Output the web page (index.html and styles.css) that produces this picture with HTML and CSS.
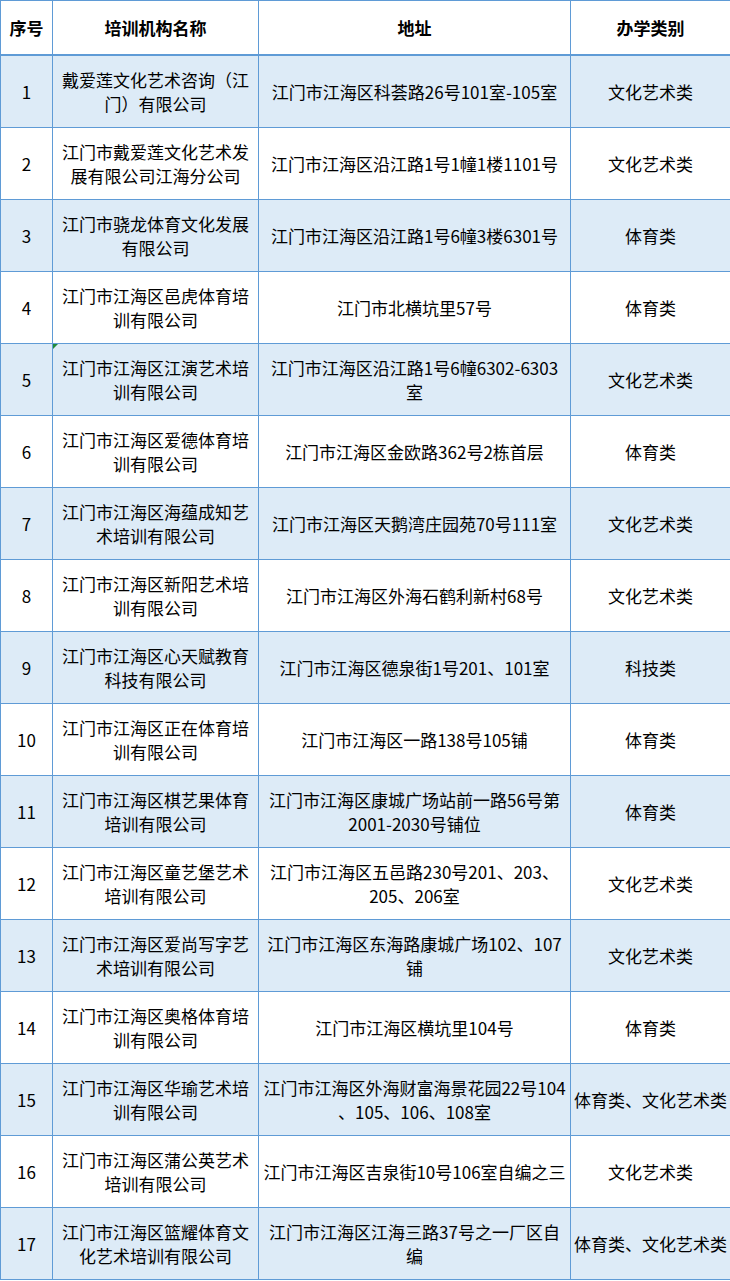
FILE: index.html
```html
<!DOCTYPE html>
<html lang="zh-CN">
<head>
<meta charset="utf-8">
<title>培训机构名单</title>
<link rel="stylesheet" href="styles.css">
</head>
<body>
<table class="list">
  <colgroup>
    <col class="c-no"><col class="c-name"><col class="c-addr"><col class="c-type">
  </colgroup>
  <thead>
    <tr class="head"><th>序号</th><th>培训机构名称</th><th>地址</th><th>办学类别</th></tr>
  </thead>
  <tbody>
    <tr class="alt"><td>1</td><td>戴爱莲文化艺术咨询（江<br>门）有限公司</td><td>江门市江海区科荟路26号101室-105室</td><td>文化艺术类</td></tr>
    <tr><td>2</td><td>江门市戴爱莲文化艺术发<br>展有限公司江海分公司</td><td>江门市江海区沿江路1号1幢1楼1101号</td><td>文化艺术类</td></tr>
    <tr class="alt"><td>3</td><td>江门市骁龙体育文化发展<br>有限公司</td><td>江门市江海区沿江路1号6幢3楼6301号</td><td>体育类</td></tr>
    <tr><td>4</td><td>江门市江海区邑虎体育培<br>训有限公司</td><td>江门市北横坑里57号</td><td>体育类</td></tr>
    <tr class="alt"><td>5</td><td class="marked"><span class="flag"></span>江门市江海区江演艺术培<br>训有限公司</td><td>江门市江海区沿江路1号6幢6302-6303<br>室</td><td>文化艺术类</td></tr>
    <tr><td>6</td><td>江门市江海区爱德体育培<br>训有限公司</td><td>江门市江海区金欧路362号2栋首层</td><td>体育类</td></tr>
    <tr class="alt"><td>7</td><td>江门市江海区海蕴成知艺<br>术培训有限公司</td><td>江门市江海区天鹅湾庄园苑70号111室</td><td>文化艺术类</td></tr>
    <tr><td>8</td><td>江门市江海区新阳艺术培<br>训有限公司</td><td>江门市江海区外海石鹤利新村68号</td><td>文化艺术类</td></tr>
    <tr class="alt"><td>9</td><td>江门市江海区心天赋教育<br>科技有限公司</td><td>江门市江海区德泉街1号201、101室</td><td>科技类</td></tr>
    <tr><td>10</td><td>江门市江海区正在体育培<br>训有限公司</td><td>江门市江海区一路138号105铺</td><td>体育类</td></tr>
    <tr class="alt"><td>11</td><td>江门市江海区棋艺果体育<br>培训有限公司</td><td>江门市江海区康城广场站前一路56号第<br>2001-2030号铺位</td><td>体育类</td></tr>
    <tr><td>12</td><td>江门市江海区童艺堡艺术<br>培训有限公司</td><td>江门市江海区五邑路230号201、203、<br>205、206室</td><td>文化艺术类</td></tr>
    <tr class="alt"><td>13</td><td>江门市江海区爱尚写字艺<br>术培训有限公司</td><td>江门市江海区东海路康城广场102、107<br>铺</td><td>文化艺术类</td></tr>
    <tr><td>14</td><td>江门市江海区奥格体育培<br>训有限公司</td><td>江门市江海区横坑里104号</td><td>体育类</td></tr>
    <tr class="alt"><td>15</td><td>江门市江海区华瑜艺术培<br>训有限公司</td><td>江门市江海区外海财富海景花园22号104<br>、105、106、108室</td><td>体育类、文化艺术类</td></tr>
    <tr><td>16</td><td>江门市江海区蒲公英艺术<br>培训有限公司</td><td>江门市江海区吉泉街10号106室自编之三</td><td>文化艺术类</td></tr>
    <tr class="alt"><td>17</td><td>江门市江海区篮耀体育文<br>化艺术培训有限公司</td><td>江门市江海区江海三路37号之一厂区自<br>编</td><td>体育类、文化艺术类</td></tr>
  </tbody>
</table>
</body>
</html>
```

FILE: styles.css
```css
html, body {
  margin: 0;
  padding: 0;
  background: #ffffff;
}

.list {
  border-collapse: collapse;
  table-layout: fixed;
  width: 730px;
  font-family: "Noto Sans CJK SC", "Noto Sans", sans-serif;
  font-size: 17px;
  line-height: 24px;
  color: #000000;
}

.c-no { width: 52px; }
.c-name { width: 206px; }
.c-addr { width: 312px; }
.c-type { width: 160px; }

.list th,
.list td {
  border: 1px solid #5f9bd6;
  padding: 0 2px;
  text-align: center;
  vertical-align: middle;
  white-space: nowrap;
  overflow: visible;
}

.list th {
  font-weight: bold;
  height: 53px;
  border-bottom: 2px solid #5f9bd6;
}

.list tbody tr {
  height: 72px;
}

.list tbody td {
  height: 71px;
  padding-top: 0;
  padding-bottom: 0;
}

.alt td {
  background: #ddebf7;
}

.marked {
  position: relative;
}

.flag {
  position: absolute;
  left: 0;
  top: 0;
  width: 0;
  height: 0;
  border-top: 5px solid #1f8a3b;
  border-right: 5px solid transparent;
}
```
